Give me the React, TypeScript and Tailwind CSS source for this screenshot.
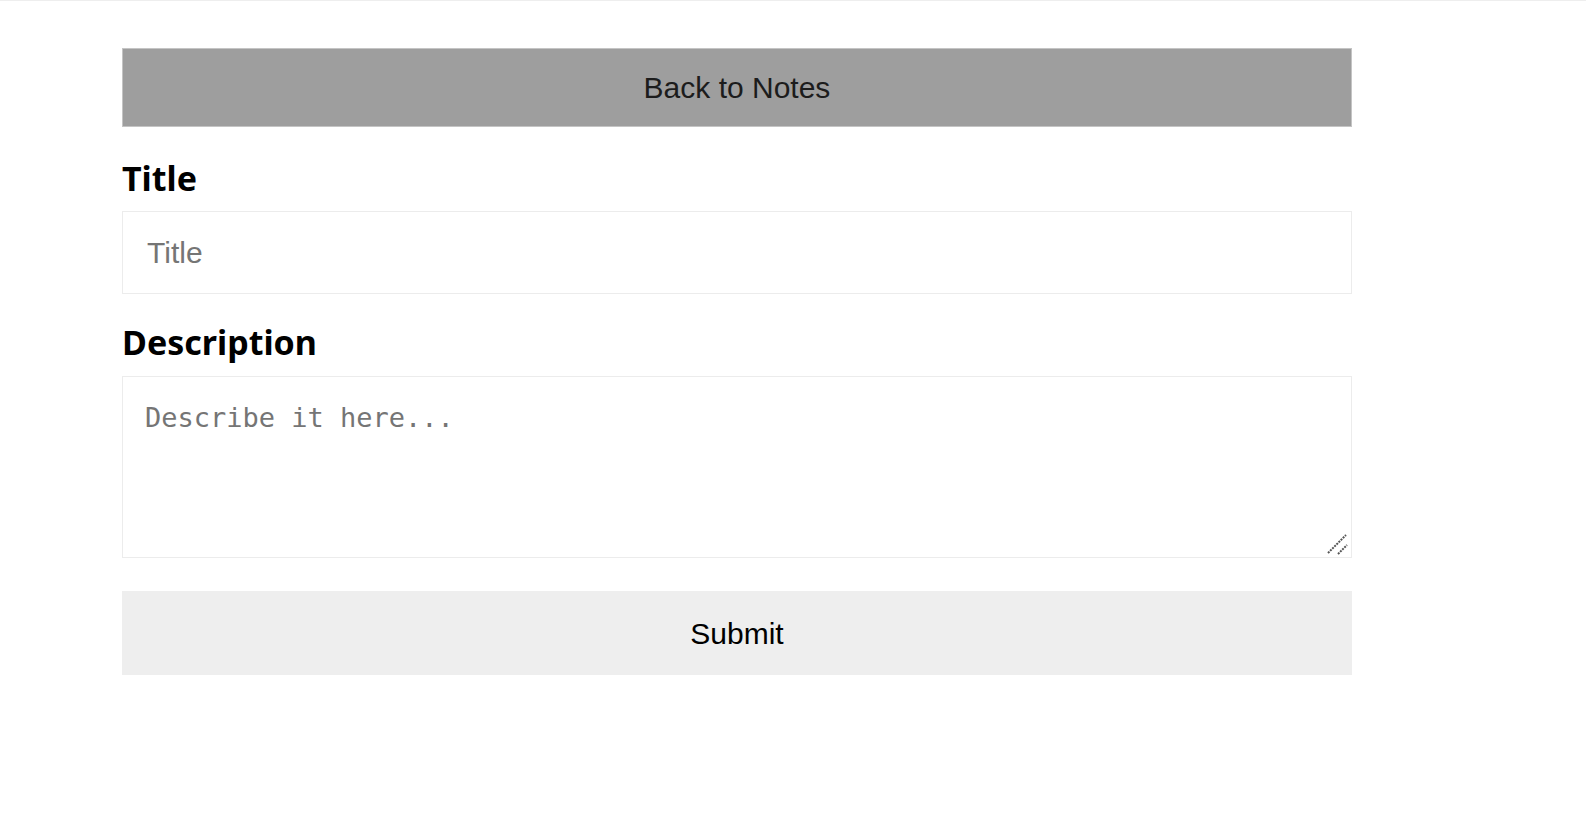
import React from "react";

const labelClass =
  "block font-['Noto_Sans',sans-serif] text-[34px] font-bold leading-[40px] text-black";

const App = () => {
  return (
    <div className="min-h-screen border-t border-[#eeeeee] bg-white">
      <div className="ml-[122px] w-[1230px] pt-[47px]">
        <button
          type="button"
          className="flex h-[79px] w-full items-center justify-center border border-[#c4c4c4] bg-[#9e9e9e] font-['Liberation_Sans',Arial,sans-serif] text-[30px] text-[#1c1c1c]"
        >
          Back to Notes
        </button>

        <form className="flex flex-col" onSubmit={(e) => e.preventDefault()}>
          <label htmlFor="title" className={`mt-[31px] ${labelClass}`}>
            Title
          </label>
          <input
            id="title"
            type="text"
            placeholder="Title"
            className="mt-[13px] h-[83px] w-full border border-[#ececec] bg-white px-[24px] font-['Liberation_Sans',Arial,sans-serif] text-[30px] text-black outline-none placeholder:text-[#757575]"
          />

          <label htmlFor="description" className={`mt-[28px] ${labelClass}`}>
            Description
          </label>
          <div className="relative mt-[14px]">
            <textarea
              id="description"
              placeholder="Describe it here..."
              className="block h-[182px] w-full resize-none border border-[#ececec] bg-white px-[22px] pt-[24px] font-['DejaVu_Sans_Mono',monospace] text-[27px] leading-[34px] text-black outline-none placeholder:text-[#757575]"
            />
            {/* resize grip */}
            <svg
              className="pointer-events-none absolute bottom-[3px] right-[4px]"
              width="22"
              height="22"
              viewBox="0 0 22 22"
            >
              <path
                d="M2 20 L20 2 M12 21 L21 12"
                stroke="#555555"
                strokeWidth="2"
                strokeDasharray="2 1"
              />
            </svg>
          </div>

          <button
            type="submit"
            className="mt-[33px] flex h-[84px] w-full items-center justify-center bg-[#eeeeee] font-['Liberation_Sans',Arial,sans-serif] text-[30px] text-black"
          >
            Submit
          </button>
        </form>
      </div>
    </div>
  );
};

export default App;
